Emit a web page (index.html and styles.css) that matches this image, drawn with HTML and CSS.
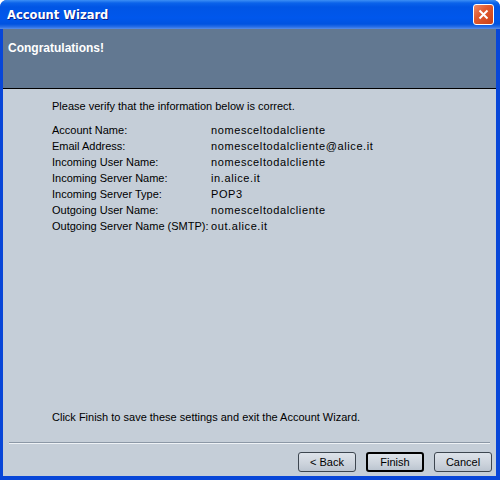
FILE: index.html
```html
<!DOCTYPE html>
<html lang="en">

<head>
    <meta charset="UTF-8">
    <meta name="viewport" content="width=device-width, initial-scale=1.0">
    <title>Account Wizard</title>

    <link rel="stylesheet" href="styles.css">
</head>

<body>
    <div class="window">
        <div class="titlebar">
            <span class="caption">Account Wizard</span>
            <button class="close" type="button" aria-label="Close">
                <svg width="11" height="11" viewBox="0 0 11 11">
                    <path d="M1.5 1.5 L9.5 9.5 M9.5 1.5 L1.5 9.5" stroke="#fff" stroke-width="2" fill="none" />
                </svg>
            </button>
        </div>

        <div class="frame">
            <div class="header">
                <h1 class="page-title">Congratulations!</h1>
            </div>

            <div class="page">
                <p class="intro">Please verify that the information below is correct.</p>

                <dl class="summary">
                    <dt>Account Name:</dt>
                    <dd>nomesceltodalcliente</dd>
                    <dt>Email Address:</dt>
                    <dd>nomesceltodalcliente@alice.it</dd>
                    <dt>Incoming User Name:</dt>
                    <dd>nomesceltodalcliente</dd>
                    <dt>Incoming Server Name:</dt>
                    <dd>in.alice.it</dd>
                    <dt>Incoming Server Type:</dt>
                    <dd>POP3</dd>
                    <dt>Outgoing User Name:</dt>
                    <dd>nomesceltodalcliente</dd>
                    <dt>Outgoing Server Name (SMTP):</dt>
                    <dd>out.alice.it</dd>
                </dl>

                <p class="hint">Click Finish to save these settings and exit the Account Wizard.</p>
            </div>

            <div class="separator"></div>

            <div class="buttons">
                <button type="button">&lt; Back</button>
                <button type="button" class="default">Finish</button>
                <button type="button">Cancel</button>
            </div>
        </div>
    </div>
</body>

</html>
```

FILE: styles.css
```css
:root {
    --face: #c5ced8;
    --header: #627891;
    --frame: #0846d8;
    --text: #000;
}

* {
    margin: 0;
    padding: 0;
    box-sizing: border-box;
}

body {
    background-color: #fff;
    font-family: "Liberation Sans", Arial, sans-serif;
    font-size: 11px;
}

.window {
    width: 500px;
    height: 480px;
    display: flex;
    flex-direction: column;
    border-radius: 7px 7px 0 0;
    overflow: hidden;
    background-color: var(--frame);
}

/* blue Luna caption */
.titlebar {
    height: 29px;
    display: flex;
    align-items: center;
    justify-content: space-between;
    padding: 0 6px 0 7px;
    background: linear-gradient(to bottom,
            #3c8ff5 0,
            #0b63ea 3px,
            #0055e5 7px,
            #0057ec 18px,
            #0053e0 24px,
            #2a6fe6 27px,
            #5b8fe8 29px);
}

.caption {
    color: #fff;
    font-family: "DejaVu Sans", sans-serif;
    font-weight: bold;
    font-size: 11.5px;
    text-shadow: 1px 1px 0 #0a1e8a;
    margin-top: 1px;
}

.close {
    width: 21px;
    height: 21px;
    border: 1px solid #fff;
    border-radius: 3px;
    background: linear-gradient(135deg, #ef8a6a 0, #e15a2f 40%, #cc4016 100%);
    display: flex;
    align-items: center;
    justify-content: center;
}

.frame {
    flex: 1;
    display: flex;
    flex-direction: column;
    margin: 0 4px 4px 3px;
    background-color: var(--face);
}

.header {
    height: 60px;
    background-color: var(--header);
    border-bottom: 1px solid #000;
    padding: 12px 5px;
}

.page-title {
    color: #fff;
    font-size: 12px;
    font-weight: bold;
}

.page {
    flex: 1;
    display: flex;
    flex-direction: column;
    padding: 9px 0 0 49px;
    color: var(--text);
    line-height: 16px;
}

.intro {
    margin-bottom: 8px;
}

.summary {
    display: grid;
    grid-template-columns: 159px auto;
}

.summary dd {
    letter-spacing: 0.6px;
}

.hint {
    margin-top: auto;
    margin-bottom: 17px;
}

.separator {
    margin: 0 6px;
    border-top: 1px solid #8c98a6;
    border-bottom: 1px solid #eef2f6;
}

.buttons {
    display: flex;
    justify-content: flex-end;
    gap: 10px;
    padding: 8px 4px 4px 0;
}

.buttons button {
    width: 58px;
    height: 20px;
    border: 1px solid #3d4650;
    border-radius: 3px;
    background: linear-gradient(to bottom, #dde3ea 0, #ccd3dc 60%, #bcc5d0 100%);
    font-family: "Liberation Sans", Arial, sans-serif;
    font-size: 11px;
    color: #000;
}

.buttons button.default {
    border: 2px solid #000;
}
```
